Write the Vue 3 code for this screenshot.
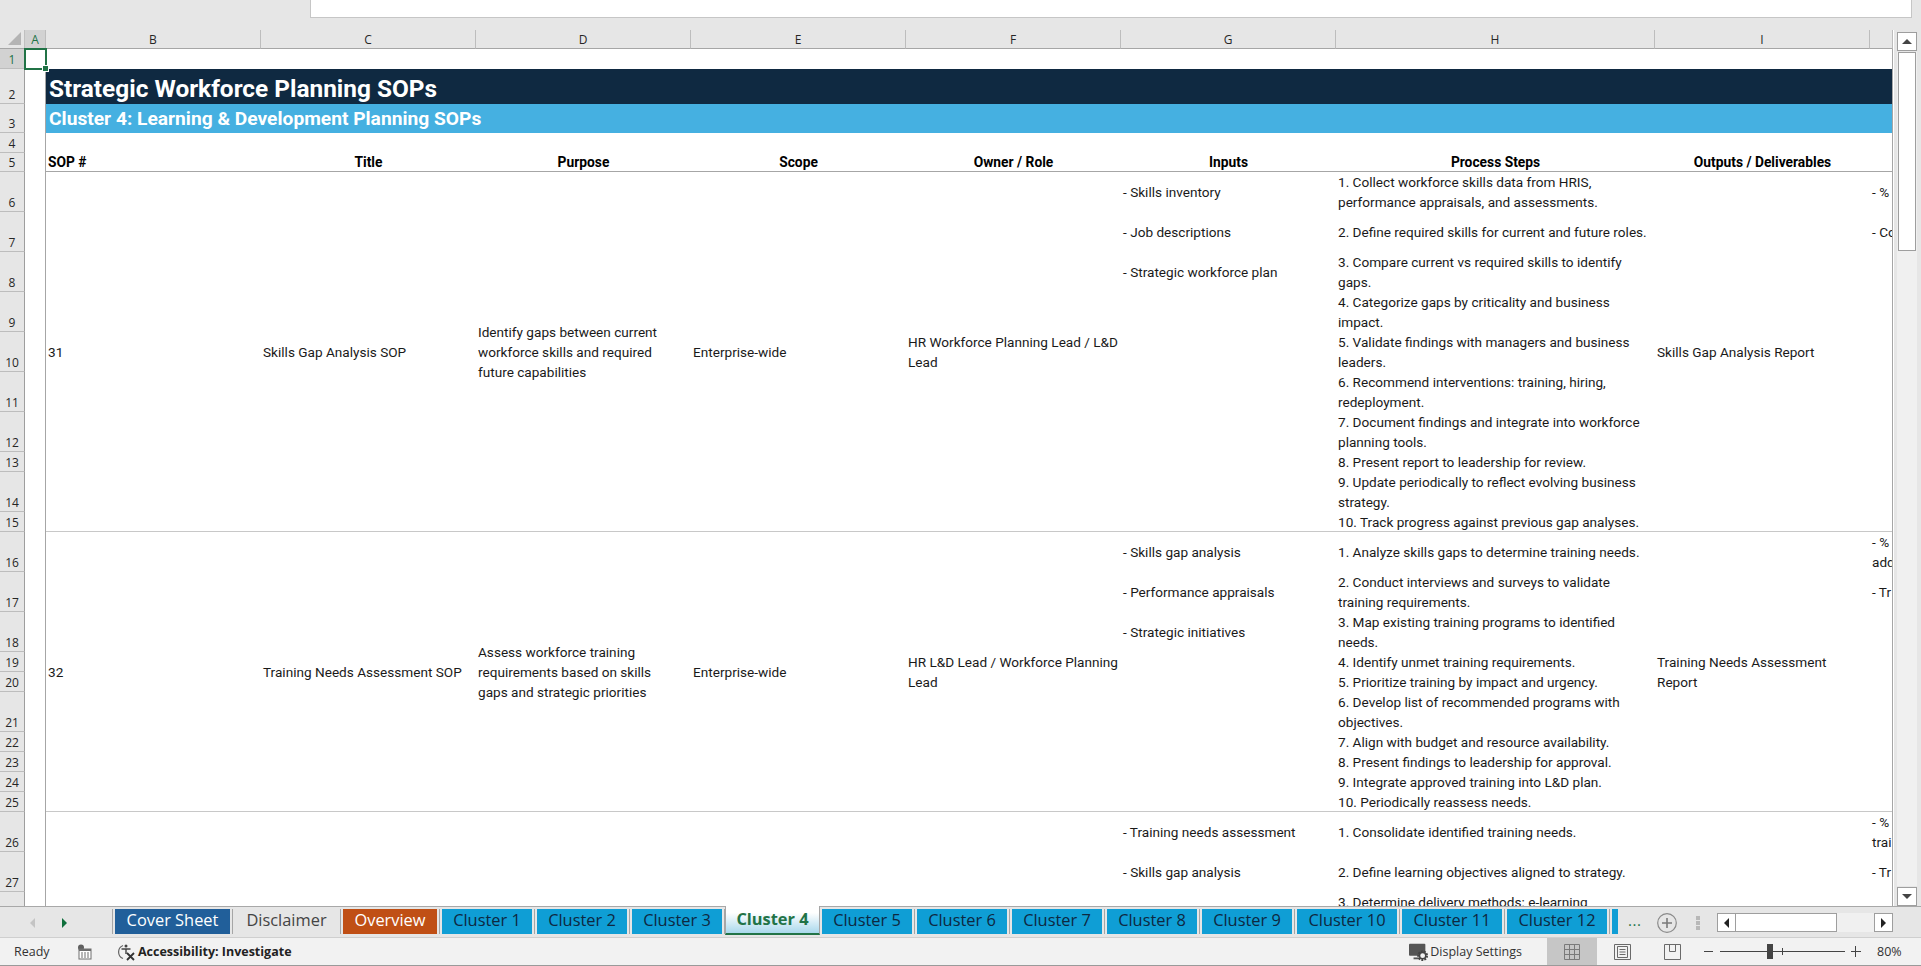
<template>
  <div class="excel">
    <div class="formula-strip">
      <div class="formula-input"></div>
    </div>

    <div class="work-area">
      <div class="sheet">
        <div class="corner"><span class="corner-tri"></span></div>
        <div
          v-for="(c, i) in columns"
          :key="c"
          class="col-head"
          :class="{ active: c === 'A' }"
          :style="{ gridColumn: i + 2 }"
        >{{ c }}</div>
        <div class="col-head" :style="{ gridColumn: 11 }"></div>

        <div
          v-for="r in rowNumbers"
          :key="r"
          class="row-head"
          :class="{ active: r === 1 }"
          :style="{ gridRow: r + 1 }"
        >{{ r < 28 ? r : '' }}</div>

        <div class="col-a-line"></div>
        <div class="selected-cell"><span class="fill-handle"></span></div>

        <div class="title-band">Strategic Workforce Planning SOPs</div>
        <div class="sub-band">Cluster 4: Learning &amp; Development Planning SOPs</div>

        <div
          v-for="h in headers"
          :key="h.text"
          class="head-cell"
          :class="{ left: h.left }"
          :style="{ gridColumn: h.col }"
        >{{ h.text }}</div>
        <div class="head-rule"></div>

        <template v-for="sop in sops" :key="sop.id">
          <div
            v-for="m in sop.merged"
            :key="m.col"
            class="merged"
            :style="{ gridColumn: m.col, gridRow: sop.span }"
          >
            <div v-for="l in m.lines" :key="l">{{ l }}</div>
          </div>
          <div class="sop-rule" :style="{ gridRow: sop.ruleRow }"></div>
        </template>

        <div
          v-for="c in cells"
          :key="c.col + '-' + c.row"
          class="cell"
          :style="{ gridColumn: c.col, gridRow: c.row }"
        >
          <div v-for="l in c.lines" :key="l">{{ l }}</div>
        </div>

        <div class="sheet-edge"></div>
      </div>

      <div class="v-scroll">
        <button class="sb-btn"><span class="tri-up"></span></button>
        <div class="sb-track"><div class="sb-thumb"></div></div>
        <button class="sb-btn"><span class="tri-down"></span></button>
      </div>
    </div>

    <div class="tab-bar">
      <div class="tab-nav">
        <span class="nav-left"></span>
        <span class="nav-right"></span>
      </div>
      <div class="tabs">
        <div
          v-for="t in tabs"
          :key="t.name"
          class="tab"
          :class="t.kind"
        >{{ t.name }}</div>
        <div class="tab cluster stub"></div>
      </div>
      <span class="more-dots">...</span>
      <svg class="add-sheet" width="20" height="20" viewBox="0 0 20 20">
        <circle cx="10" cy="10" r="9.3" fill="none" stroke="#8a8a8a" stroke-width="1.2" />
        <path d="M10 5v10M5 10h10" stroke="#7a7a7a" stroke-width="1.6" />
      </svg>
      <span class="split-dots"><i></i><i></i><i></i></span>
      <div class="h-scroll">
        <button class="hs-btn"><span class="tri-left"></span></button>
        <div class="hs-thumb"></div>
        <div class="hs-track"></div>
        <button class="hs-btn"><span class="tri-right"></span></button>
      </div>
    </div>

    <div class="status-bar">
      <span class="ready">Ready</span>
      <svg class="macro-icon" width="16" height="16" viewBox="0 0 16 16">
        <circle cx="4" cy="3.5" r="3" fill="#5f5f5f" />
        <rect x="2" y="5" width="12" height="10" fill="#fff" stroke="#6e6e6e" />
        <path d="M2 5h12v2H2z" fill="#6e6e6e" />
        <path d="M4 9h2M7 9h2M10 9h2M4 11h2M7 11h2M10 11h2M4 13h2M7 13h2M10 13h2" stroke="#6e6e6e" />
      </svg>
      <svg class="access-icon" width="20" height="20" viewBox="0 0 20 20">
        <path d="M7 3.500a7 7 0 0 0 0 13" fill="none" stroke="#666" stroke-width="1.2" />
        <circle cx="10" cy="4" r="1.5" fill="#444" />
        <path d="M5.500 7h9M10 7v5" stroke="#444" stroke-width="1.4" />
        <path d="M11 11l7 7M18 11l-7 7" stroke="#333" stroke-width="1.8" />
      </svg>
      <span class="access-text">Accessibility: Investigate</span>
      <span class="status-gap"></span>
      <svg class="display-icon" width="20" height="20" viewBox="0 0 22 20">
        <rect x="0" y="1" width="18" height="13" rx="1" fill="#555" />
        <path d="M5 17h7" stroke="#555" stroke-width="2" />
        <circle cx="15" cy="14" r="4.6" fill="none" stroke="#444" stroke-width="2.6" stroke-dasharray="2 1.2" />
        <circle cx="15" cy="14" r="3.4" fill="#f2f2f2" stroke="#444" stroke-width="1.5" />
      </svg>
      <span class="display-text">Display Settings</span>
      <div class="view-btn on">
        <svg width="16" height="16" viewBox="0 0 16 16">
          <path d="M.5.5h15v15H.5zM5.500.5v15M10.500.5v15M.5 5.500h15M.5 10.500h15" fill="none" stroke="#7a7a7a" />
        </svg>
      </div>
      <div class="view-btn">
        <svg width="17" height="16" viewBox="0 0 17 16">
          <path d="M.5.5h16v15H.5zM3.500 2.500h10v11h-10zM5.500 5.500h6M5.500 8h6M5.500 10.500h6" fill="none" stroke="#6a6a6a" />
        </svg>
      </div>
      <div class="view-btn">
        <svg width="17" height="16" viewBox="0 0 17 16">
          <path d="M.5.5h16v15H.5zM5.500.5v7h6V.5" fill="none" stroke="#6a6a6a" />
        </svg>
      </div>
      <div class="zoom">
        <span class="zoom-minus"></span>
        <div class="zoom-track">
          <span class="zoom-tick"></span>
          <span class="zoom-knob"></span>
        </div>
        <span class="zoom-plus"></span>
        <span class="zoom-pct">80%</span>
      </div>
    </div>
  </div>
</template>

<script setup>
const columns = ['A', 'B', 'C', 'D', 'E', 'F', 'G', 'H', 'I']

const rowNumbers = Array.from({ length: 28 }, (_, i) => i + 1)

const headers = [
  { text: 'SOP #', col: 3, left: true },
  { text: 'Title', col: 4 },
  { text: 'Purpose', col: 5 },
  { text: 'Scope', col: 6 },
  { text: 'Owner / Role', col: 7 },
  { text: 'Inputs', col: 8 },
  { text: 'Process Steps', col: 9 },
  { text: 'Outputs / Deliverables', col: 10 }
]

const sops = [
  {
    id: 31,
    span: '7 / 17',
    ruleRow: 16,
    merged: [
      { col: 3, lines: ['31'] },
      { col: 4, lines: ['Skills Gap Analysis SOP'] },
      { col: 5, lines: ['Identify gaps between current', 'workforce skills and required', 'future capabilities'] },
      { col: 6, lines: ['Enterprise-wide'] },
      { col: 7, lines: ['HR Workforce Planning Lead / L&D', 'Lead'] },
      { col: 10, lines: ['Skills Gap Analysis Report'] }
    ]
  },
  {
    id: 32,
    span: '17 / 27',
    ruleRow: 26,
    merged: [
      { col: 3, lines: ['32'] },
      { col: 4, lines: ['Training Needs Assessment SOP'] },
      { col: 5, lines: ['Assess workforce training', 'requirements based on skills', 'gaps and strategic priorities'] },
      { col: 6, lines: ['Enterprise-wide'] },
      { col: 7, lines: ['HR L&D Lead / Workforce Planning', 'Lead'] },
      { col: 10, lines: ['Training Needs Assessment', 'Report'] }
    ]
  }
]

// G = 8, H = 9, J = 11 in the grid (row header is column 1), sheet row n sits on grid row n + 1
const cellData = [
  [8, 6, '- Skills inventory'],
  [8, 7, '- Job descriptions'],
  [8, 8, '- Strategic workforce plan'],
  [9, 6, '1. Collect workforce skills data from HRIS,', 'performance appraisals, and assessments.'],
  [9, 7, '2. Define required skills for current and future roles.'],
  [9, 8, '3. Compare current vs required skills to identify', 'gaps.'],
  [9, 9, '4. Categorize gaps by criticality and business', 'impact.'],
  [9, 10, '5. Validate findings with managers and business', 'leaders.'],
  [9, 11, '6. Recommend interventions: training, hiring,', 'redeployment.'],
  [9, 12, '7. Document findings and integrate into workforce', 'planning tools.'],
  [9, 13, '8. Present report to leadership for review.'],
  [9, 14, '9. Update periodically to reflect evolving business', 'strategy.'],
  [9, 15, '10. Track progress against previous gap analyses.'],
  [11, 6, '- %'],
  [11, 7, '- Co'],
  [8, 16, '- Skills gap analysis'],
  [8, 17, '- Performance appraisals'],
  [8, 18, '- Strategic initiatives'],
  [9, 16, '1. Analyze skills gaps to determine training needs.'],
  [9, 17, '2. Conduct interviews and surveys to validate', 'training requirements.'],
  [9, 18, '3. Map existing training programs to identified', 'needs.'],
  [9, 19, '4. Identify unmet training requirements.'],
  [9, 20, '5. Prioritize training by impact and urgency.'],
  [9, 21, '6. Develop list of recommended programs with', 'objectives.'],
  [9, 22, '7. Align with budget and resource availability.'],
  [9, 23, '8. Present findings to leadership for approval.'],
  [9, 24, '9. Integrate approved training into L&D plan.'],
  [9, 25, '10. Periodically reassess needs.'],
  [11, 16, '- %', 'add'],
  [11, 17, '- Tr'],
  [8, 26, '- Training needs assessment'],
  [8, 27, '- Skills gap analysis'],
  [9, 26, '1. Consolidate identified training needs.'],
  [9, 27, '2. Define learning objectives aligned to strategy.'],
  [9, 28, '3. Determine delivery methods: e-learning,', 'workshops.'],
  [11, 26, '- %', 'trai'],
  [11, 27, '- Tr']
]

const cells = cellData.map(([col, row, ...lines]) => ({ col, row: row + 1, lines }))

const tabs = [
  { name: 'Cover Sheet', kind: 'cover' },
  { name: 'Disclaimer', kind: 'plain' },
  { name: 'Overview', kind: 'overview' },
  { name: 'Cluster 1', kind: 'cluster' },
  { name: 'Cluster 2', kind: 'cluster' },
  { name: 'Cluster 3', kind: 'cluster' },
  { name: 'Cluster 4', kind: 'current' },
  { name: 'Cluster 5', kind: 'cluster' },
  { name: 'Cluster 6', kind: 'cluster' },
  { name: 'Cluster 7', kind: 'cluster' },
  { name: 'Cluster 8', kind: 'cluster' },
  { name: 'Cluster 9', kind: 'cluster' },
  { name: 'Cluster 10', kind: 'cluster wide' },
  { name: 'Cluster 11', kind: 'cluster wide' },
  { name: 'Cluster 12', kind: 'cluster wide' }
]
</script>

<style>
html, body {
  margin: 0;
  overflow: hidden;
  background: #e6e6e6;
}
</style>

<style scoped>
.excel {
  width: 1921px;
  height: 966px;
  display: flex;
  flex-direction: column;
  overflow: hidden;
  font-family: Roboto, "Liberation Sans", sans-serif;
  color: #111;
  background: #e6e6e6;
}

/* formula bar leftovers */
.formula-strip {
  height: 30px;
  flex: none;
  padding-left: 310px;
  padding-right: 9px;
  box-sizing: border-box;
}

.formula-input {
  height: 18px;
  background: #fff;
  border: 1px solid #c6c6c6;
  border-top: none;
  box-sizing: border-box;
}

.work-area {
  height: 877px;
  flex: none;
  display: flex;
  border-bottom: 1px solid #a8a8a8;
  box-sizing: border-box;
}

.sheet {
  position: relative;
  width: 1894px;
  height: 876px;
  flex: none;
  overflow: hidden;
  background: #fff;
  display: grid;
  grid-template-columns: 25px 21px 215px 215px 215px 215px 215px 215px 319px 215px 23px;
  grid-template-rows:
    19px 20px 35px 29px 20px 19px
    40px 40px 40px 40px 40px 40px 40px 20px 40px 20px
    40px 40px 40px 20px 20px 40px 20px 20px 20px 20px
    40px 40px 40px;
}

.corner {
  grid-column: 1;
  grid-row: 1;
  background: #e6e6e6;
  border-bottom: 1px solid #a6a6a6;
  border-right: 1px solid #c0c0c0;
  position: relative;
}

.corner-tri {
  position: absolute;
  right: 3px;
  bottom: 3px;
  width: 0;
  height: 0;
  border-style: solid;
  border-width: 0 0 13px 13px;
  border-color: transparent transparent #b4b4b4 transparent;
}

.col-head {
  grid-row: 1;
  background: #e6e6e6;
  border-bottom: 1px solid #a6a6a6;
  border-right: 1px solid #bdbdbd;
  display: flex;
  align-items: center;
  justify-content: center;
  font-family: "Open Sans", sans-serif;
  font-size: 12px;
  color: #262626;
}

.col-head.active {
  background: #d2d2d2;
  color: #217346;
  border-bottom: 1px solid #8a8a8a;
}

.row-head {
  grid-column: 1;
  background: #e6e6e6;
  border-bottom: 1px solid #bdbdbd;
  border-right: 1px solid #9e9e9e;
  display: flex;
  align-items: flex-end;
  justify-content: center;
  font-family: "Open Sans", sans-serif;
  font-size: 12px;
  line-height: 16px;
  color: #262626;
}

.row-head.active {
  background: #d2d2d2;
  color: #217346;
}

.col-a-line {
  grid-column: 2;
  grid-row: 2 / -1;
  border-right: 1px solid #a6a6a6;
  pointer-events: none;
}

.selected-cell {
  grid-column: 2;
  grid-row: 2;
  margin: -1px -1px -1px -1px;
  border: 2px solid #217346;
  position: relative;
  z-index: 2;
}

.fill-handle {
  position: absolute;
  right: -4px;
  bottom: -4px;
  width: 5px;
  height: 5px;
  background: #217346;
  border: 1px solid #fff;
}

.title-band {
  grid-column: 3 / -1;
  grid-row: 3;
  background: #0f2941;
  color: #fff;
  font-size: 24.4px;
  font-weight: 700;
  display: flex;
  align-items: center;
  padding-left: 3px;
  padding-top: 3px;
  white-space: nowrap;
}

.sub-band {
  grid-column: 3 / -1;
  grid-row: 4;
  background: #45b0e1;
  color: #fff;
  font-size: 19.2px;
  font-weight: 700;
  display: flex;
  align-items: center;
  padding-left: 3px;
  white-space: nowrap;
}

.head-cell {
  grid-row: 6;
  font-size: 13.8px;
  font-weight: 700;
  text-align: center;
  line-height: 19px;
  white-space: nowrap;
  color: #000;
}

.head-cell.left {
  text-align: left;
  padding-left: 2px;
}

.head-rule {
  grid-column: 3 / -1;
  grid-row: 6;
  border-bottom: 1px solid #a6a6a6;
}

.sop-rule {
  grid-column: 3 / -1;
  border-bottom: 1px solid #c8c8c8;
}

.merged,
.cell {
  font-size: 13.6px;
  line-height: 20px;
  color: #1a1a1a;
  padding-left: 2px;
  white-space: nowrap;
  display: flex;
  flex-direction: column;
  justify-content: center;
  overflow: hidden;
  min-width: 0;
}

.sheet-edge {
  grid-column: 11;
  grid-row: 2 / -1;
  border-right: 1px solid #a6a6a6;
  pointer-events: none;
}

.v-scroll {
  flex: 1;
  display: flex;
  flex-direction: column;
  padding: 2px 4px 0 3px;
  gap: 1px;
  box-sizing: border-box;
}

.sb-btn {
  height: 19px;
  flex: none;
  padding: 0;
  background: #fff;
  border: 1px solid #9e9e9e;
  display: flex;
  align-items: center;
  justify-content: center;
}

.sb-track {
  flex: 1;
  background: #f0f0f0;
}

.sb-thumb {
  height: 199px;
  margin: 0 1px;
  background: #fff;
  border: 1px solid #9e9e9e;
  box-sizing: border-box;
}

.tri-up,
.tri-down,
.tri-left,
.tri-right {
  display: block;
  width: 0;
  height: 0;
  border-style: solid;
}

.tri-up {
  border-width: 0 5px 5px 5px;
  border-color: transparent transparent #444 transparent;
}

.tri-down {
  border-width: 5px 5px 0 5px;
  border-color: #444 transparent transparent transparent;
}

.tri-left {
  border-width: 5px 5px 5px 0;
  border-color: transparent #222 transparent transparent;
}

.tri-right {
  border-width: 5px 0 5px 5px;
  border-color: transparent transparent transparent #222;
}

.tab-bar {
  height: 31px;
  flex: none;
  display: flex;
  align-items: flex-start;
  background: #e6e6e6;
  border-bottom: 1px solid #cfcfcf;
  box-sizing: border-box;
}

.tab-nav {
  width: 113px;
  height: 25px;
  margin-top: 2px;
  flex: none;
  position: relative;
  border-right: 1px solid #a6a6a6;
  box-sizing: border-box;
}

.nav-left,
.nav-right {
  position: absolute;
  top: 9px;
  width: 0;
  height: 0;
  border-style: solid;
}

.nav-left {
  left: 30px;
  border-width: 5px 5px 5px 0;
  border-color: transparent #c4c4c4 transparent transparent;
}

.nav-right {
  left: 62px;
  border-width: 5px 0 5px 5px;
  border-color: transparent transparent transparent #0f6f3c;
}

.tabs {
  flex: none;
  display: flex;
  align-items: flex-start;
  padding-top: 2px;
  padding-left: 2px;
}

.tab {
  height: 25px;
  flex: none;
  margin-right: 5px;
  padding-bottom: 3px;
  display: flex;
  align-items: center;
  justify-content: center;
  font-family: "Open Sans", sans-serif;
  font-size: 16.4px;
  line-height: 1;
  box-sizing: border-box;
  position: relative;
}

.tab::after {
  content: "";
  position: absolute;
  right: -3px;
  top: 0;
  bottom: 0;
  border-right: 1px solid #a6a6a6;
}

.tab.cover {
  width: 115px;
  background: #215f9a;
  color: #fff;
}

.tab.plain {
  width: 103px;
  color: #444;
}

.tab.overview {
  width: 94px;
  background: #c04f15;
  color: #fff;
}

.tab.cluster {
  width: 90px;
  background: #0f9ed5;
  color: #0e2841;
}

.tab.cluster.wide {
  width: 100px;
}

.tab.current {
  width: 95px;
  height: 29px;
  margin-top: -3px;
  margin-left: -2px;
  margin-right: 2px;
  padding-bottom: 0;
  background: linear-gradient(#fff 25%, #a9d8ec);
  border-left: 1px solid #a6a6a6;
  border-right: 1px solid #a6a6a6;
  border-bottom: 2px solid #217346;
  color: #217346;
  font-weight: 700;
}

.tab.current::after {
  display: none;
}

.tab.stub {
  width: 6px;
  margin-right: 0;
}

.tab.stub::after {
  display: none;
}

.more-dots {
  margin-left: 10px;
  width: 13px;
  color: #217346;
  font-family: "Open Sans", sans-serif;
  font-size: 15px;
  line-height: 26px;
  letter-spacing: 0.5px;
  flex: none;
}

.add-sheet {
  margin-top: 6px;
  margin-left: 16px;
  flex: none;
}

.split-dots {
  margin-left: 19px;
  margin-top: 9px;
  display: flex;
  flex-direction: column;
  gap: 1px;
  flex: none;
}

.split-dots i {
  display: block;
  width: 4px;
  height: 4px;
  background: #b8b8b8;
}

.h-scroll {
  margin-left: 17px;
  margin-top: 6px;
  width: 176px;
  height: 19px;
  display: flex;
  flex: none;
}

.hs-btn {
  width: 19px;
  flex: none;
  padding: 0;
  background: #fff;
  border: 1px solid #9e9e9e;
  display: flex;
  align-items: center;
  justify-content: center;
}

.hs-thumb {
  width: 101px;
  background: #fff;
  border: 1px solid #9e9e9e;
  border-left: none;
  box-sizing: border-box;
}

.hs-track {
  flex: 1;
  background: #f0f0f0;
}

.status-bar {
  flex: 1;
  display: flex;
  align-items: center;
  background: #f2f2f2;
  font-family: "Open Sans", sans-serif;
  font-size: 12.5px;
  color: #333;
  border-bottom: 1px solid #9a9a9a;
  box-sizing: border-box;
}

.ready {
  margin-left: 14px;
  width: 49px;
}

.macro-icon {
  margin-left: 14px;
}

.access-icon {
  margin-left: 23px;
}

.access-text {
  margin-left: 2px;
  font-weight: 700;
  color: #222;
}

.status-gap {
  flex: 1;
}

.display-text {
  margin-left: 1px;
  margin-right: 25px;
}

.view-btn {
  width: 50px;
  height: 100%;
  display: flex;
  align-items: center;
  justify-content: center;
}

.view-btn.on {
  background: #c6c6c6;
}

.zoom {
  display: flex;
  align-items: center;
  margin-left: 7px;
  margin-right: 20px;
}

.zoom-minus,
.zoom-plus {
  display: block;
  width: 9px;
  height: 1px;
  background: #444;
  position: relative;
}

.zoom-plus {
  width: 10px;
}

.zoom-plus::after {
  content: "";
  position: absolute;
  left: 4px;
  top: -5px;
  width: 1px;
  height: 11px;
  background: #444;
}

.zoom-track {
  width: 125px;
  height: 1px;
  margin: 0 6px 0 7px;
  background: #444;
  position: relative;
}

.zoom-tick {
  position: absolute;
  left: 62px;
  top: -3px;
  width: 1px;
  height: 7px;
  background: #444;
}

.zoom-knob {
  position: absolute;
  left: 47px;
  top: -7px;
  width: 6px;
  height: 15px;
  background: #444;
}

.zoom-pct {
  margin-left: 16px;
  font-size: 12.5px;
  width: 24px;
}
</style>
